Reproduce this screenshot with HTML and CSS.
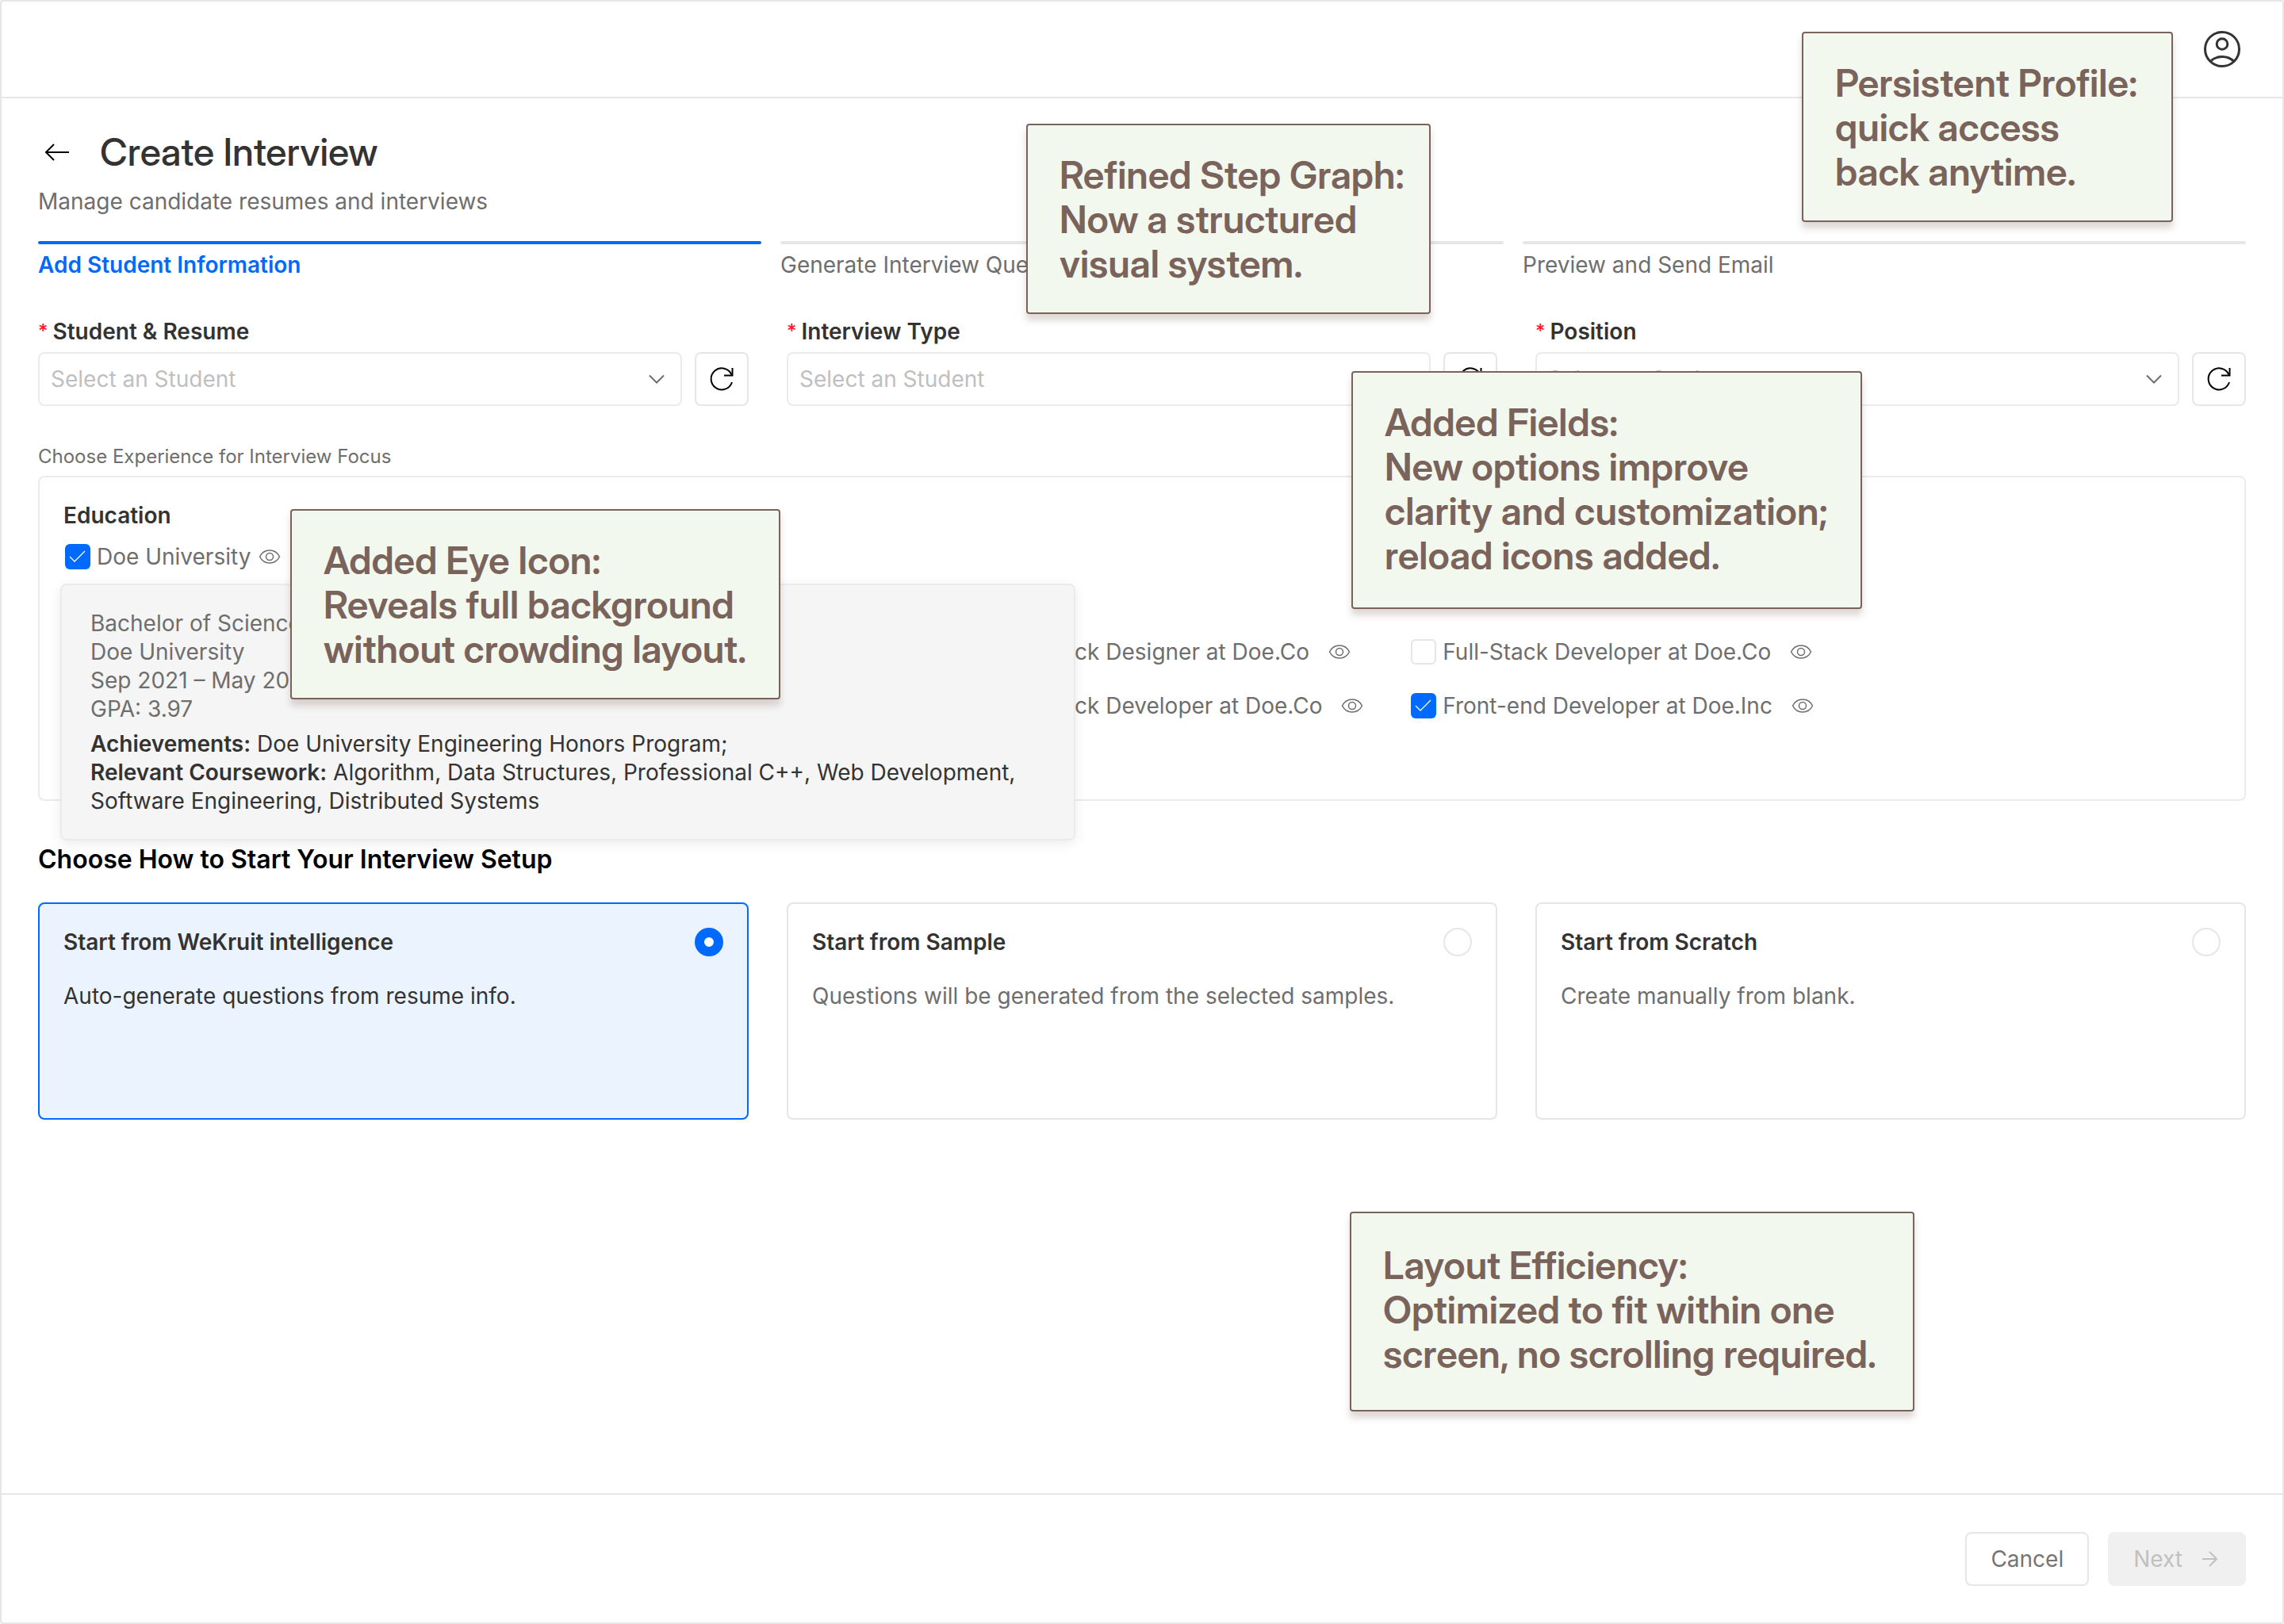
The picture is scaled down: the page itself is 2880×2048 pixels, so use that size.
FILE: index.html
```html
<!DOCTYPE html>
<html lang="en">
<head>
<meta charset="utf-8">
<meta name="viewport" content="width=device-width, initial-scale=1">
<title>Create Interview</title>
<link rel="stylesheet" href="styles.css">
</head>
<body>
<svg class="sprite" aria-hidden="true">
  <symbol id="eye" viewBox="0 0 28 28"><path d="M1.500 14C4 9 8.500 6 14 6s10 3 12.500 8C24 19 19.500 22 14 22S4 19 1.500 14z"/><circle cx="14" cy="14" r="4.500"/></symbol>
  <symbol id="reload" viewBox="0 0 36 36"><path d="M31 22a13.500 13.500 0 1 1-.5-9.500"/><path d="M31.500 4v9.500H21"/></symbol>
  <symbol id="chevron" viewBox="0 0 20 20"><path d="M1 5.500l9 9 9-9"/></symbol>
</svg>
<div class="page">
  <header class="topbar">
    <button class="icon-button profile" type="button" aria-label="Profile">
      <svg viewBox="0 0 60 60"><circle cx="30" cy="30" r="21.500"/><circle cx="30" cy="23.500" r="6.800"/><path d="M15 45.500c4-4 9-6 15-6s11 2 15 6"/></svg>
    </button>
  </header>

  <main class="content">
    <div class="title-row">
      <button class="icon-button back" type="button" aria-label="Back">
        <svg viewBox="0 0 48 48"><path d="M39 24H10M20 14L10 24l10 10"/></svg>
      </button>
      <h1>Create Interview</h1>
    </div>
    <p class="subtitle">Manage candidate resumes and interviews</p>

    <ol class="steps">
      <li class="step step-active">Add Student Information</li>
      <li class="step">Generate Interview Questions</li>
      <li class="step">Preview and Send Email</li>
    </ol>

    <div class="thirds fields">
      <div class="field">
        <label for="student"><span class="required">*</span>Student &amp; Resume</label>
        <div class="control">
          <div class="select"><select id="student"><option>Select an Student</option></select><svg><use href="#chevron"/></svg></div>
          <button class="reload" type="button" aria-label="Reload students"><svg><use href="#reload"/></svg></button>
        </div>
      </div>
      <div class="field">
        <label for="type"><span class="required">*</span>Interview Type</label>
        <div class="control">
          <div class="select"><select id="type"><option>Select an Student</option></select><svg><use href="#chevron"/></svg></div>
          <button class="reload" type="button" aria-label="Reload interview types"><svg><use href="#reload"/></svg></button>
        </div>
      </div>
      <div class="field">
        <label for="position"><span class="required">*</span>Position</label>
        <div class="control">
          <div class="select"><select id="position"><option>Select an Student</option></select><svg><use href="#chevron"/></svg></div>
          <button class="reload" type="button" aria-label="Reload positions"><svg><use href="#reload"/></svg></button>
        </div>
      </div>
    </div>

    <p class="caption">Choose Experience for Interview Focus</p>
    <section class="panel">
      <h2 class="panel-title">Education</h2>
      <div class="choice choice-education">
        <label><input type="checkbox" checked>Doe University</label>
        <button class="eye" type="button" aria-label="View details"><svg><use href="#eye"/></svg></button>
        <div class="popover">
          <p class="popover-meta">Bachelor of Science<br>Doe University<br>Sep 2021 – May 2025<br>GPA: 3.97</p>
          <p><strong>Achievements:</strong> Doe University Engineering Honors Program;</p>
          <p><strong>Relevant Coursework:</strong> Algorithm, Data Structures, Professional C++, Web Development, Software Engineering, Distributed Systems</p>
        </div>
      </div>
      <div class="experience">
        <div class="choice third">
          <label><input type="checkbox">Full-Stack Designer at Doe.Co</label>
          <button class="eye" type="button" aria-label="View details"><svg><use href="#eye"/></svg></button>
        </div>
        <div class="choice">
          <label><input type="checkbox">Full-Stack Developer at Doe.Co</label>
          <button class="eye" type="button" aria-label="View details"><svg><use href="#eye"/></svg></button>
        </div>
        <div class="choice third">
          <label><input type="checkbox">Full-Stack Developer at Doe.Co</label>
          <button class="eye" type="button" aria-label="View details"><svg><use href="#eye"/></svg></button>
        </div>
        <div class="choice">
          <label><input type="checkbox" checked>Front-end Developer at Doe.Inc</label>
          <button class="eye" type="button" aria-label="View details"><svg><use href="#eye"/></svg></button>
        </div>
      </div>
    </section>

    <h2 class="setup-title">Choose How to Start Your Interview Setup</h2>
    <div class="thirds">
      <label class="card card-selected">
        <span class="card-head">Start from WeKruit intelligence<input type="radio" name="setup" checked></span>
        <span class="card-text">Auto-generate questions from resume info.</span>
      </label>
      <label class="card">
        <span class="card-head">Start from Sample<input type="radio" name="setup"></span>
        <span class="card-text">Questions will be generated from the selected samples.</span>
      </label>
      <label class="card">
        <span class="card-head">Start from Scratch<input type="radio" name="setup"></span>
        <span class="card-text">Create manually from blank.</span>
      </label>
    </div>
  </main>

  <footer class="actions">
    <button class="button" type="button">Cancel</button>
    <button class="button button-next" type="button" disabled>Next<svg viewBox="0 0 28 28"><path d="M5 14h18M14 5l9 9-9 9"/></svg></button>
  </footer>

  <aside class="note note-profile">Persistent Profile:<br>quick access<br>back anytime.</aside>
  <aside class="note note-steps">Refined Step Graph:<br>Now a structured<br>visual system.</aside>
  <aside class="note note-fields">Added Fields:<br>New options improve<br>clarity and customization;<br>reload icons added.</aside>
  <aside class="note note-eye">Added Eye Icon:<br>Reveals full background<br>without crowding layout.</aside>
  <aside class="note note-layout">Layout Efficiency:<br>Optimized to fit within one<br>screen, no scrolling required.</aside>
</div>
</body>
</html>
```
FILE: styles.css
```css
:root {
  --blue: #006aff;
  --line: #e6e6e6;
  --text: #333;
  --muted: #6e6e6e;
  --note: #7a635b;
}

* {
  box-sizing: border-box;
  margin: 0;
  padding: 0;
}

body {
  background: #fff;
  color: var(--text);
  font: 400 28px/36px Inter, "Liberation Sans", sans-serif;
}

button,
select {
  font: inherit;
  color: inherit;
}

button {
  background: none;
  border: 0;
}

svg {
  display: block;
  fill: none;
  stroke: currentColor;
  stroke-width: 2;
}

.sprite {
  position: absolute;
  width: 0;
  height: 0;
}

.page {
  position: relative;
  display: flex;
  flex-direction: column;
  min-height: 100vh;
  border: 2px solid var(--line);
  border-radius: 4px;
}

/* Top bar */
.topbar {
  display: flex;
  justify-content: flex-end;
  padding: 30px 46px;
  border-bottom: 2px solid var(--line);
}

.profile svg {
  width: 60px;
  height: 60px;
  stroke-width: 3;
}

/* Page heading */
.content {
  flex: 1;
  padding: 38px 46px;
}

.title-row {
  display: flex;
  align-items: center;
  gap: 30px;
}

.back {
  color: #000;
}

.back svg {
  width: 48px;
  height: 48px;
}

h1 {
  font: 500 48px/60px "Inter Display", Inter, sans-serif;
}

.subtitle {
  margin-top: 14px;
  color: var(--muted);
}

/* Steps */
.steps {
  display: grid;
  grid-template-columns: repeat(3, 1fr);
  gap: 24px;
  margin-top: 32px;
  list-style: none;
}

.step {
  color: var(--muted);
}

.step::before {
  content: "";
  display: block;
  height: 4px;
  margin-bottom: 8px;
  border-radius: 2px;
  background: var(--line);
}

.step-active {
  color: var(--blue);
  font-weight: 600;
}

.step-active::before {
  background: var(--blue);
}

/* Fields */
.thirds {
  display: grid;
  grid-template-columns: repeat(3, 1fr);
  gap: 48px;
}

.fields {
  margin-top: 48px;
}

.field label {
  display: flex;
  gap: 6px;
  font-weight: 600;
}

.required {
  color: #ff1a1a;
  font-size: 24px;
  font-weight: 500;
}

.control {
  display: flex;
  gap: 16px;
  margin-top: 8px;
}

.select {
  position: relative;
  flex: 1;
}

.select select {
  width: 100%;
  height: 68px;
  padding: 0 60px 0 14px;
  appearance: none;
  background: #fff;
  border: 2px solid #ebebeb;
  border-radius: 8px;
  color: #bfbfbf;
}

.select svg {
  position: absolute;
  top: 24px;
  right: 22px;
  width: 20px;
  height: 20px;
  color: var(--muted);
  pointer-events: none;
}

.reload {
  display: grid;
  place-items: center;
  width: 68px;
  height: 68px;
  border: 2px solid var(--line);
  border-radius: 8px;
  color: #000;
}

.reload svg {
  width: 36px;
  height: 36px;
}

/* Experience panel */
.caption {
  margin-top: 48px;
  font-size: 24px;
  line-height: 32px;
  color: var(--muted);
}

.panel {
  min-height: 410px;
  margin-top: 8px;
  padding: 30px;
  border: 2px solid #ebebeb;
  border-radius: 8px;
}

.panel-title {
  font-size: 28px;
  font-weight: 600;
}

.choice {
  display: flex;
  align-items: center;
  gap: 24px;
  color: var(--muted);
  white-space: nowrap;
}

.choice label {
  display: flex;
  align-items: center;
  gap: 8px;
}

.choice-education {
  position: relative;
  gap: 10px;
  margin-top: 16px;
}

.choice input {
  width: 32px;
  height: 32px;
  margin-left: 2px;
  appearance: none;
  background: #fff;
  border: 2px solid var(--line);
  border-radius: 6px;
}

.choice input:checked {
  border: 0;
  background: var(--blue) url("data:image/svg+xml,%3Csvg xmlns='http://www.w3.org/2000/svg' viewBox='0 0 32 32'%3E%3Cpath d='M6 16l6 6L25 9' fill='none' stroke='white' stroke-width='1.300'/%3E%3C/svg%3E");
}

.eye svg {
  width: 28px;
  height: 28px;
  stroke-width: 1.500;
}

.experience {
  display: grid;
  grid-template-columns: repeat(3, 20.8%) 1fr;
  row-gap: 32px;
  margin-top: 84px;
}

.third {
  grid-column: 3;
}

.popover {
  position: absolute;
  z-index: 1;
  top: 52px;
  left: -4px;
  width: 1280px;
  padding: 30px 36px;
  background: #f5f5f5;
  border: 2px solid #ebebeb;
  border-radius: 8px;
  box-shadow: 0 4px 16px rgba(0, 0, 0, 0.08);
  color: var(--text);
  white-space: normal;
}

.popover-meta {
  margin-bottom: 8px;
  color: var(--muted);
}

strong {
  font-weight: 600;
}

/* Setup cards */
.setup-title {
  margin: 54px 0 34px;
  color: #000;
  font-size: 32px;
  font-weight: 600;
  line-height: 40px;
}

.card {
  display: flex;
  flex-direction: column;
  gap: 32px;
  min-height: 274px;
  padding: 30px;
  border: 2px solid var(--line);
  border-radius: 8px;
}

.card-head {
  display: flex;
  justify-content: space-between;
  font-weight: 600;
}

.card input {
  width: 36px;
  height: 36px;
  appearance: none;
  background: #fff;
  border: 2px solid var(--line);
  border-radius: 50%;
}

.card input:checked {
  border: 12px solid var(--blue);
}

.card-text {
  color: var(--muted);
}

.card-selected {
  border-color: var(--blue);
  background: #ebf3ff;
}

.card-selected .card-text {
  color: var(--text);
}

/* Footer */
.actions {
  display: flex;
  justify-content: flex-end;
  gap: 24px;
  padding: 47px 46px 46px;
  border-top: 2px solid var(--line);
}

.button {
  display: flex;
  align-items: center;
  justify-content: center;
  gap: 20px;
  height: 68px;
  padding: 0 30px;
  border: 2px solid var(--line);
  border-radius: 8px;
  color: #757575;
}

.button-next {
  background: #f0f0f0;
  border-color: #f0f0f0;
  color: #c0c0c0;
}

.button-next svg {
  width: 28px;
  height: 28px;
}

/* Annotation notes */
.note {
  position: absolute;
  z-index: 2;
  min-height: 240px;
  padding: 35px 40px 33px;
  background: #f3f8ee;
  border: 2px solid var(--note);
  border-radius: 4px;
  box-shadow: 0 8px 8px rgba(122, 99, 91, 0.25);
  color: var(--note);
  font: 600 48px/56px "Inter Display", Inter, sans-serif;
  white-space: nowrap;
}

.note-profile {
  top: 38px;
  left: 2270px;
  width: 468px;
}

.note-steps {
  top: 154px;
  left: 1292px;
  width: 510px;
}

.note-fields {
  top: 466px;
  left: 1702px;
  width: 644px;
  min-height: 300px;
}

.note-eye {
  top: 640px;
  left: 364px;
  width: 618px;
}

.note-layout {
  top: 1526px;
  left: 1700px;
  width: 712px;
  min-height: 252px;
  padding-top: 38px;
}
```
